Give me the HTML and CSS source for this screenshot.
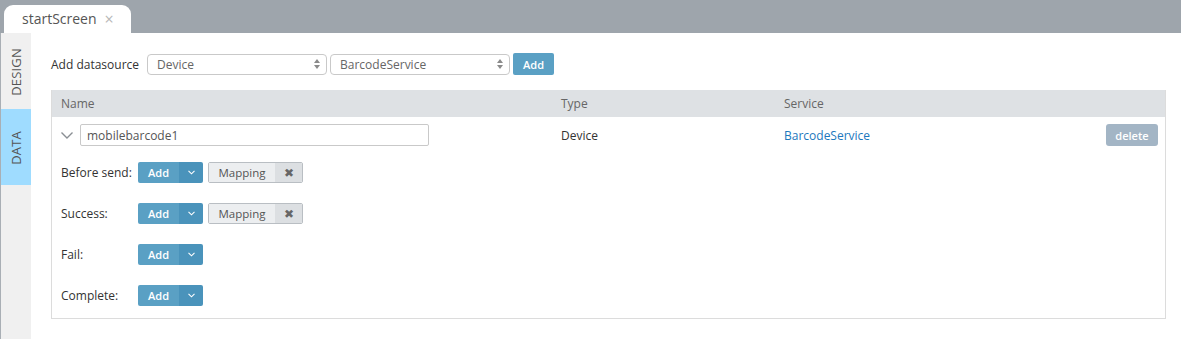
FILE: index.html
```html
<!DOCTYPE html>
<html>
<head>
<meta charset="utf-8">
<link rel="stylesheet" href="styles.css">
</head>
<body>
<div class="topbar">
  <div class="tab"><span class="tab-title">startScreen</span><span class="tab-close">×</span></div>
</div>
<div class="page">
  <aside class="sidebar">
    <div class="side-tab design"><span>DESIGN</span></div>
    <div class="side-tab data"><span>DATA</span></div>
  </aside>
  <main class="main">
    <div class="toolbar">
      <span class="tb-label">Add datasource</span>
      <div class="select"><span>Device</span><svg class="updown" width="6" height="10" viewBox="0 0 6 10"><path d="M0 4 L3 0 L6 4Z M0 6 L3 10 L6 6Z" fill="#8a8a8a"/></svg></div>
      <div class="select"><span>BarcodeService</span><svg class="updown" width="6" height="10" viewBox="0 0 6 10"><path d="M0 4 L3 0 L6 4Z M0 6 L3 10 L6 6Z" fill="#8a8a8a"/></svg></div>
      <button class="btn-add">Add</button>
    </div>
    <div class="table">
      <div class="thead">
        <div class="col-name">Name</div>
        <div class="col-type">Type</div>
        <div class="col-service">Service</div>
      </div>
      <div class="tbody">
        <div class="main-row">
          <div class="col-name name-cell">
            <svg class="chev" width="12" height="7" viewBox="0 0 12 7"><path d="M0.5 0.5 L6 6 L11.5 0.5" fill="none" stroke="#8a8f94" stroke-width="1.4"/></svg>
            <div class="text-input">mobilebarcode1</div>
          </div>
          <div class="col-type">Device</div>
          <div class="col-service"><a class="link">BarcodeService</a></div>
          <button class="btn-delete">delete</button>
        </div>
        <div class="event-row">
          <span class="ev-label">Before send:</span>
          <div class="split"><span class="split-main">Add</span><span class="split-caret"><svg width="7" height="5" viewBox="0 0 7 5"><path d="M0.5 0.8 L3.5 3.8 L6.5 0.8" fill="none" stroke="#fff" stroke-width="1.1"/></svg></span></div>
          <div class="tag"><span class="tag-text">Mapping</span><span class="tag-x">✖</span></div>
        </div>
        <div class="event-row">
          <span class="ev-label">Success:</span>
          <div class="split"><span class="split-main">Add</span><span class="split-caret"><svg width="7" height="5" viewBox="0 0 7 5"><path d="M0.5 0.8 L3.5 3.8 L6.5 0.8" fill="none" stroke="#fff" stroke-width="1.1"/></svg></span></div>
          <div class="tag"><span class="tag-text">Mapping</span><span class="tag-x">✖</span></div>
        </div>
        <div class="event-row">
          <span class="ev-label">Fail:</span>
          <div class="split"><span class="split-main">Add</span><span class="split-caret"><svg width="7" height="5" viewBox="0 0 7 5"><path d="M0.5 0.8 L3.5 3.8 L6.5 0.8" fill="none" stroke="#fff" stroke-width="1.1"/></svg></span></div>
        </div>
        <div class="event-row">
          <span class="ev-label">Complete:</span>
          <div class="split"><span class="split-main">Add</span><span class="split-caret"><svg width="7" height="5" viewBox="0 0 7 5"><path d="M0.5 0.8 L3.5 3.8 L6.5 0.8" fill="none" stroke="#fff" stroke-width="1.1"/></svg></span></div>
        </div>
      </div>
    </div>
  </main>
</div>
</body>
</html>
```
FILE: styles.css
```css
* { box-sizing: border-box; }
html, body { margin: 0; padding: 0; background: #fff; }
body {
  font-family: "Open Sans", "Liberation Sans", sans-serif;
  font-size: 12px;
  color: #333;
  width: 1181px;
  height: 339px;
  overflow: hidden;
}
.topbar {
  height: 33px;
  background: #9ea5ac;
  display: flex;
  align-items: flex-end;
  padding-left: 4px;
}
.tab {
  width: 127px;
  height: 28px;
  background: #fff;
  border-radius: 9px 9px 0 0;
  display: flex;
  align-items: center;
  padding-left: 18px;
  padding-bottom: 1px;
}
.tab-title { font-size: 14px; color: #555; }
.tab-close { font-size: 16px; color: #b8b8b8; margin-left: 8px; margin-top: 1px; }
.page { display: flex; height: 306px; }
.sidebar {
  width: 31px;
  background: #f0f0f0;
  border-left: 1px solid #a9afb5;
  display: flex;
  flex-direction: column;
}
.side-tab {
  display: flex;
  align-items: center;
  justify-content: center;
  color: #555;
  font-size: 13px;
}
.side-tab span {
  writing-mode: vertical-rl;
  transform: rotate(180deg);
  letter-spacing: 0.2px;
}
.side-tab.design { height: 76px; padding-top: 2px; }
.side-tab.data { height: 76px; background: #9fdcff; padding-top: 1px; }
.main { flex: 1; padding: 20px 15px 0 20px; }
.toolbar { display: flex; align-items: center; height: 22px; }
.tb-label { margin-right: 8px; font-size: 12px; }
.select {
  width: 180px;
  height: 21px;
  border: 1px solid #c9c9c9;
  border-radius: 4px;
  display: flex;
  align-items: center;
  justify-content: space-between;
  padding: 0 6px 0 9px;
  color: #666;
  margin-right: 3px;
  background: #fff;
}
.btn-add {
  font-family: inherit;
  width: 41px;
  height: 22px;
  border: none;
  border-radius: 2px;
  background: #5aa0c4;
  color: #fff;
  font-weight: 600;
  font-size: 11px;
  padding: 0;
}
.table {
  margin-top: 15px;
  border: 1px solid #dcdcdc;
  border-top: none;
  width: 1115px;
}
.thead {
  display: flex;
  height: 27px;
  align-items: center;
  background: #dee1e4;
  color: #666;
  padding-left: 9px;
}
.col-name { width: 500px; flex: none; }
.col-type { width: 223px; flex: none; }
.col-service { flex: 1; }
.tbody { padding: 0 0 12px 9px; }
.main-row {
  display: flex;
  align-items: center;
  height: 28px;
  margin-top: 4px;
  padding-right: 7px;
}
.name-cell { display: flex; align-items: center; }
.chev { margin-right: 7px; margin-top: 1px; }
.text-input {
  width: 349px;
  height: 22px;
  border: 1px solid #c9c9c9;
  border-radius: 2px;
  padding-left: 6px;
  display: flex;
  align-items: center;
  color: #555;
}
.link { color: #1c78bd; }
.btn-delete {
  font-family: inherit;
  width: 52px;
  height: 22px;
  border: none;
  border-radius: 3px;
  background: #a3b5c5;
  color: #fff;
  font-size: 11px;
  font-weight: 600;
  padding: 0;
}
.event-row {
  display: flex;
  align-items: center;
  height: 21px;
  margin-top: 20px;
}
.main-row + .event-row { margin-top: 13px; }
.ev-label { width: 77px; flex: none; }
.split {
  display: flex;
  height: 21px;
  border-radius: 2px;
  overflow: hidden;
  color: #fff;
  font-weight: 600;
  font-size: 11px;
}
.split-main {
  width: 41px;
  background: #5aa0c4;
  display: flex;
  align-items: center;
  justify-content: center;
}
.split-caret {
  width: 24px;
  background: #4a93bb;
  display: flex;
  align-items: center;
  justify-content: center;
}
.tag {
  display: flex;
  margin-left: 5px;
  height: 21px;
  border: 1px solid #b9bec3;
  border-radius: 2px;
  overflow: hidden;
  color: #555;
  font-size: 11.5px;
}
.tag-text {
  width: 66px;
  background: #eceef0;
  display: flex;
  align-items: center;
  justify-content: center;
}
.tag-x {
  width: 27px;
  background: #dcdfe2;
  display: flex;
  align-items: center;
  justify-content: center;
  color: #666;
  font-size: 12px;
}
```
